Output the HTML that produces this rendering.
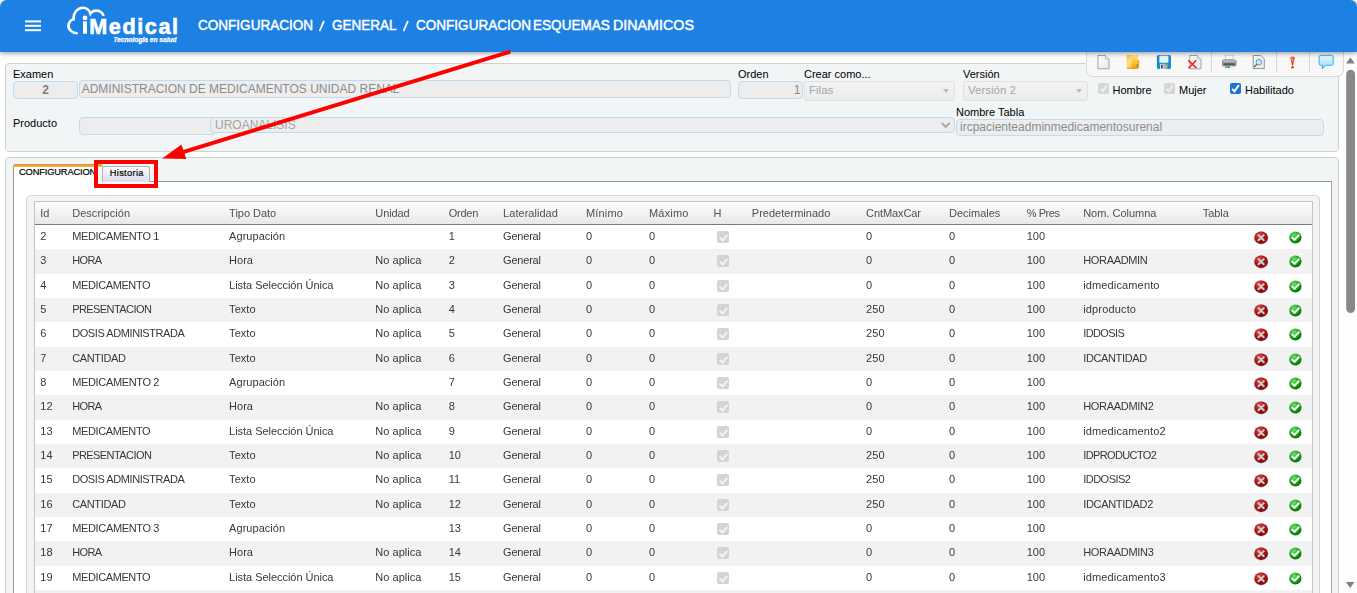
<!DOCTYPE html>
<html><head><meta charset="utf-8">
<style>
*{box-sizing:border-box;margin:0;padding:0}
html,body{width:1357px;height:593px;overflow:hidden;background:#fff;font-family:"Liberation Sans",sans-serif;color:#000}
.abs{position:absolute}
#hdr{position:absolute;left:0;top:0;width:1357px;height:52px;background:#1d80e3;border-radius:7px 7px 0 0;box-shadow:0 1px 5px rgba(40,40,40,.5);z-index:5}
#hdr .bc{position:absolute;top:17px;color:#fff;font-weight:normal;font-size:14px;white-space:nowrap;line-height:16px;transform-origin:0 0;-webkit-text-stroke:0.45px #fff}
#tb{position:absolute;left:1086px;top:40px;width:258px;height:37px;background:#f8f8f8;border:1px solid #dadada;border-radius:0 0 7px 7px;z-index:3}
#p1{position:absolute;left:5px;top:63px;width:1334px;height:89px;background:#f2f5f6;border:1px solid #d0d0d0;border-radius:4px}
#p2{position:absolute;left:5px;top:157px;width:1334px;height:460px;background:#f2f5f6;border:1px solid #d0d0d0;border-radius:4px}
.lbl{position:absolute;font-size:11px;line-height:13px;color:#000;white-space:nowrap}
.inp{position:absolute;background:#ededed;border:1px solid #c3dbee;border-radius:4px;font-size:12px;color:#8c8c8c;white-space:nowrap;overflow:hidden;line-height:15px}
.sel{position:absolute;background:linear-gradient(#f3f3f3,#ececec);border:1px solid #e0e0e0;border-radius:2.5px;font-size:11.5px;color:#a2a6aa;white-space:nowrap;line-height:16px}
.tri{position:absolute;width:0;height:0;border-left:3.5px solid transparent;border-right:3.5px solid transparent;border-top:4px solid #bdbdbd}
.chk{position:absolute;width:10.5px;height:10.5px;background:#d6d6d6;border-radius:2px}
.chk.on{background:#1a73e8;box-shadow:inset 0 0 0 .6px #0b4fb0}
.chk::after{content:"";position:absolute;left:3.2px;top:1px;width:2.8px;height:5.8px;border:solid #f6f6f6;border-width:0 1.6px 1.6px 0;transform:rotate(40deg)}
.chk.on::after{border-color:#fff}
#tabc{position:absolute;left:13px;top:181px;width:1319px;height:420px;background:#fff;border:1px solid #aaa;border-left-color:#999}
#gw{position:absolute;left:26px;top:195px;width:1294px;height:420px;background:#f2f5f6;border:1px solid #d5d5d5;border-radius:5px}
#tbl{position:absolute;left:34px;top:201px;width:1279px;height:420px;background:#fff;border:1px solid #c4c4c4;overflow:hidden;will-change:transform}
#th{position:absolute;left:0;top:0;width:100%;height:23px;background:linear-gradient(#fdfdfd,#e8e8e8);border-bottom:1px solid #7a7a7a;box-shadow:0 1px 0 rgba(120,120,120,.35)}
.hc{position:absolute;top:5px;font-size:11px;color:#505050;white-space:nowrap;line-height:13px;letter-spacing:0}
.r{position:absolute;left:0;width:100%}
.c{position:absolute;top:4.5px;font-size:11px;color:#383838;white-space:nowrap;line-height:13px}
.cb{position:absolute;top:6px;width:12px;height:12px;background:#d4d4d4;border-radius:2px}
.cb::after{content:"";position:absolute;left:3.5px;top:1.5px;width:3px;height:6px;border:solid #f4f4f4;border-width:0 2px 2px 0;transform:rotate(40deg)}
.ic{position:absolute}
.xr{position:absolute;top:6px;width:14px;height:13px;border-radius:50%;background:radial-gradient(circle at 40% 30%,#e04848,#b01010 60%,#800000);box-shadow:0 0 1px #555}
.ok{position:absolute;top:6.5px;width:12.5px;height:12px;border-radius:50%;background:radial-gradient(circle at 40% 30%,#50d050,#10a010 60%,#007000)}
#sb{position:absolute;left:1343px;top:52px;width:14px;height:541px;background:#fdfdfd}
</style></head><body>
<svg width="0" height="0" style="position:absolute">
 <defs>
  <radialGradient id="rg" cx=".38" cy=".3" r=".75"><stop offset="0" stop-color="#d85050"/><stop offset=".55" stop-color="#b01010"/><stop offset="1" stop-color="#700404"/></radialGradient>
  <radialGradient id="gg" cx=".38" cy=".3" r=".75"><stop offset="0" stop-color="#70e070"/><stop offset=".55" stop-color="#18a818"/><stop offset="1" stop-color="#006a00"/></radialGradient>
  <symbol id="ix" viewBox="0 0 16 15"><ellipse cx="8.1" cy="7.9" rx="7.2" ry="6.6" fill="#6a6a6a" opacity=".45"/><ellipse cx="8.1" cy="7.7" rx="6.7" ry="6.2" fill="url(#rg)"/><path d="M5.4 5.1 L10.8 10.3 M10.8 5.1 L5.4 10.3" stroke="#cfcfcf" stroke-width="1.9" stroke-linecap="round"/></symbol>
  <symbol id="iok" viewBox="0 0 13 13"><ellipse cx="6.4" cy="6.5" rx="6.1" ry="6" fill="url(#gg)"/><path d="M3.2 6.6 L5.5 8.9 L9.8 4.3" fill="none" stroke="#fff" stroke-width="2" stroke-linecap="round" stroke-linejoin="round"/></symbol>
 </defs>
</svg>

<div id="p1">
</div>
<div class="lbl" style="left:13px;top:68px">Examen</div>
<div class="inp" style="left:13px;top:81px;width:65px;height:18px;text-align:center;padding-top:1px;font-weight:bold;color:#808080">2</div>
<div class="inp" style="left:79px;top:80px;width:652px;height:18px;padding:1px 0 0 1.7px">ADMINISTRACION DE MEDICAMENTOS UNIDAD RENAL</div>
<div class="lbl" style="left:738px;top:68px">Orden</div>
<div class="inp" style="left:738px;top:81px;width:65px;height:18px;text-align:right;padding:1px 1.5px 0 0;color:#8a8a8a">1</div>
<div class="lbl" style="left:804px;top:68px">Crear como...</div>
<div class="sel" style="left:804px;top:81px;width:151px;height:20px;padding-left:4px">Filas</div>
<div class="tri" style="left:943px;top:89.3px"></div>
<div class="lbl" style="left:963px;top:68px">Versión</div>
<div class="sel" style="left:963px;top:81px;width:125px;height:20px;padding-left:4px">Versión 2</div>
<div class="tri" style="left:1076px;top:89.3px"></div>
<svg class="abs" style="left:1098.2px;top:83px" width="11" height="11"><rect x="0" y="0" width="11" height="11" rx="2" fill="#d6d6d6"/><path d="M2.4 5.7 L4.6 8.1 L8.8 2.4" fill="none" stroke="#f2f2f2" stroke-width="1.7"/></svg>
<div class="lbl" style="left:1112.5px;top:84px">Hombre</div>
<svg class="abs" style="left:1164.2px;top:83px" width="11" height="11"><rect x="0" y="0" width="11" height="11" rx="2" fill="#d6d6d6"/><path d="M2.4 5.7 L4.6 8.1 L8.8 2.4" fill="none" stroke="#f2f2f2" stroke-width="1.7"/></svg>
<div class="lbl" style="left:1179px;top:84px">Mujer</div>
<svg class="abs" style="left:1230.3px;top:82.9px" width="11" height="11"><rect x="0" y="0" width="11" height="11" rx="2" fill="#1a74d6"/><path d="M2.2 5.8 L4.4 8.3 L8.9 2.1" fill="none" stroke="#fff" stroke-width="2"/></svg>
<div class="lbl" style="left:1245px;top:84px">Habilitado</div>

<div class="lbl" style="left:13px;top:117px">Producto</div>
<div class="inp" style="left:79px;top:117px;width:137px;height:18px"></div>
<div class="inp" style="left:210px;top:117px;width:745px;height:16px;padding:0 0 0 4px;color:#a4a4a4">UROANALISIS</div>
<svg class="abs" style="left:938px;top:119px" width="16" height="12"><path d="M3.8 4 L7.7 8 L11.6 4" fill="none" stroke="#a6a6a6" stroke-width="1.9"/></svg>
<div class="lbl" style="left:956px;top:106px">Nombre Tabla</div>
<div class="inp" style="left:956px;top:119px;width:368px;height:17px;padding:0 0 0 3px">ircpacienteadminmedicamentosurenal</div>

<div id="p2"></div>
<div id="tabc"></div>
<div id="tabline" style="position:absolute;left:150px;top:181px;width:1182px;height:1px;background:#8e9c9c"></div>
<div id="tab1" style="position:absolute;left:13px;top:164px;width:90px;height:18px;background:#fff;border-left:1px solid #999;border-radius:3px 3px 0 0"></div>
<div class="abs" style="left:13px;top:164px;width:90px;height:3px;background:linear-gradient(#e68a28,#f6b850);border-radius:3px 3px 0 0"></div>
<div class="abs" style="left:13px;top:181px;width:1px;height:1px;background:#999"></div>
<span class="abs" style="left:19px;top:167px;font-size:9.3px;line-height:11px;letter-spacing:-0.15px;color:#000;white-space:nowrap;-webkit-text-stroke:0.2px #000">CONFIGURACION</span>
<div id="tab2" style="position:absolute;left:102px;top:166px;width:48px;height:16px;background:linear-gradient(#fbfbfd,#dcdcec);border:1px solid #a8b4bc;border-bottom:none;border-radius:3px 3px 0 0"></div>
<span class="abs" style="left:109.8px;top:168px;font-size:9.2px;line-height:11px;letter-spacing:0.35px;color:#000;white-space:nowrap;-webkit-text-stroke:0.2px #000">Historia</span>

<div id="gw"></div>
<div id="tbl">
 <div id="th"><span class="hc" style="left:5.3px;letter-spacing:0.011px">Id</span><span class="hc" style="left:37.2px;letter-spacing:0.035px">Descripción</span><span class="hc" style="left:194.1px;letter-spacing:-0.022px">Tipo Dato</span><span class="hc" style="left:340.3px;letter-spacing:-0.098px">Unidad</span><span class="hc" style="left:413.7px;letter-spacing:-0.233px">Orden</span><span class="hc" style="left:468.1px;letter-spacing:0.033px">Lateralidad</span><span class="hc" style="left:551.0px;letter-spacing:0.156px">Mínimo</span><span class="hc" style="left:614.0px;letter-spacing:0.189px">Máximo</span><span class="hc" style="left:678.5px;letter-spacing:-0.097px">H</span><span class="hc" style="left:716.8px;letter-spacing:0.020px">Predeterminado</span><span class="hc" style="left:831.1px;letter-spacing:-0.097px">CntMaxCar</span><span class="hc" style="left:914.0px;letter-spacing:-0.005px">Decimales</span><span class="hc" style="left:991.7px;letter-spacing:-0.415px">% Pres</span><span class="hc" style="left:1048.2px;letter-spacing:-0.007px">Nom. Columna</span><span class="hc" style="left:1167.7px;letter-spacing:-0.027px">Tabla</span></div>
<div class="r" style="top:23px;height:24px;background:#ffffff"><span class="c" style="left:5.3px;letter-spacing:0.064px">2</span><span class="c" style="left:37.2px;letter-spacing:-0.348px">MEDICAMENTO 1</span><span class="c" style="left:194.1px;letter-spacing:0.044px">Agrupación</span><span class="c" style="left:413.7px;letter-spacing:0.064px">1</span><span class="c" style="left:468.1px;letter-spacing:-0.216px">General</span><span class="c" style="left:551.0px;letter-spacing:0.064px">0</span><span class="c" style="left:614.0px;letter-spacing:0.064px">0</span><span class="cb" style="left:682.0px"></span><span class="c" style="left:831.1px;letter-spacing:0.064px">0</span><span class="c" style="left:914.0px;letter-spacing:0.064px">0</span><span class="c" style="left:991.7px;letter-spacing:0.064px">100</span><svg class="ic" style="left:1217.5px;top:5px" width="16" height="15"><use href="#ix"/></svg><svg class="ic" style="left:1253.5px;top:6px" width="13" height="13"><use href="#iok"/></svg></div>
<div class="r" style="top:47px;height:25px;background:#f2f2f2"><span class="c" style="left:5.3px;letter-spacing:0.064px">3</span><span class="c" style="left:37.2px;letter-spacing:-0.603px">HORA</span><span class="c" style="left:194.1px;letter-spacing:-0.003px">Hora</span><span class="c" style="left:340.3px;letter-spacing:0.027px">No aplica</span><span class="c" style="left:413.7px;letter-spacing:0.064px">2</span><span class="c" style="left:468.1px;letter-spacing:-0.216px">General</span><span class="c" style="left:551.0px;letter-spacing:0.064px">0</span><span class="c" style="left:614.0px;letter-spacing:0.064px">0</span><span class="cb" style="left:682.0px"></span><span class="c" style="left:831.1px;letter-spacing:0.064px">0</span><span class="c" style="left:914.0px;letter-spacing:0.064px">0</span><span class="c" style="left:991.7px;letter-spacing:0.064px">100</span><span class="c" style="left:1048.2px;letter-spacing:-0.335px">HORAADMIN</span><svg class="ic" style="left:1217.5px;top:5px" width="16" height="15"><use href="#ix"/></svg><svg class="ic" style="left:1253.5px;top:6px" width="13" height="13"><use href="#iok"/></svg></div>
<div class="r" style="top:72px;height:24px;background:#ffffff"><span class="c" style="left:5.3px;letter-spacing:0.064px">4</span><span class="c" style="left:37.2px;letter-spacing:-0.388px">MEDICAMENTO</span><span class="c" style="left:194.1px;letter-spacing:-0.039px">Lista Selección Única</span><span class="c" style="left:340.3px;letter-spacing:0.027px">No aplica</span><span class="c" style="left:413.7px;letter-spacing:0.064px">3</span><span class="c" style="left:468.1px;letter-spacing:-0.216px">General</span><span class="c" style="left:551.0px;letter-spacing:0.064px">0</span><span class="c" style="left:614.0px;letter-spacing:0.064px">0</span><span class="cb" style="left:682.0px"></span><span class="c" style="left:831.1px;letter-spacing:0.064px">0</span><span class="c" style="left:914.0px;letter-spacing:0.064px">0</span><span class="c" style="left:991.7px;letter-spacing:0.064px">100</span><span class="c" style="left:1048.2px;letter-spacing:0.139px">idmedicamento</span><svg class="ic" style="left:1217.5px;top:5px" width="16" height="15"><use href="#ix"/></svg><svg class="ic" style="left:1253.5px;top:6px" width="13" height="13"><use href="#iok"/></svg></div>
<div class="r" style="top:96px;height:24px;background:#f2f2f2"><span class="c" style="left:5.3px;letter-spacing:0.064px">5</span><span class="c" style="left:37.2px;letter-spacing:-0.574px">PRESENTACION</span><span class="c" style="left:194.1px;letter-spacing:0.043px">Texto</span><span class="c" style="left:340.3px;letter-spacing:0.027px">No aplica</span><span class="c" style="left:413.7px;letter-spacing:0.064px">4</span><span class="c" style="left:468.1px;letter-spacing:-0.216px">General</span><span class="c" style="left:551.0px;letter-spacing:0.064px">0</span><span class="c" style="left:614.0px;letter-spacing:0.064px">0</span><span class="cb" style="left:682.0px"></span><span class="c" style="left:831.1px;letter-spacing:0.064px">250</span><span class="c" style="left:914.0px;letter-spacing:0.064px">0</span><span class="c" style="left:991.7px;letter-spacing:0.064px">100</span><span class="c" style="left:1048.2px;letter-spacing:0.158px">idproducto</span><svg class="ic" style="left:1217.5px;top:5px" width="16" height="15"><use href="#ix"/></svg><svg class="ic" style="left:1253.5px;top:6px" width="13" height="13"><use href="#iok"/></svg></div>
<div class="r" style="top:120px;height:25px;background:#ffffff"><span class="c" style="left:5.3px;letter-spacing:0.064px">6</span><span class="c" style="left:37.2px;letter-spacing:-0.420px">DOSIS ADMINISTRADA</span><span class="c" style="left:194.1px;letter-spacing:0.043px">Texto</span><span class="c" style="left:340.3px;letter-spacing:0.027px">No aplica</span><span class="c" style="left:413.7px;letter-spacing:0.064px">5</span><span class="c" style="left:468.1px;letter-spacing:-0.216px">General</span><span class="c" style="left:551.0px;letter-spacing:0.064px">0</span><span class="c" style="left:614.0px;letter-spacing:0.064px">0</span><span class="cb" style="left:682.0px"></span><span class="c" style="left:831.1px;letter-spacing:0.064px">250</span><span class="c" style="left:914.0px;letter-spacing:0.064px">0</span><span class="c" style="left:991.7px;letter-spacing:0.064px">100</span><span class="c" style="left:1048.2px;letter-spacing:-0.597px">IDDOSIS</span><svg class="ic" style="left:1217.5px;top:5px" width="16" height="15"><use href="#ix"/></svg><svg class="ic" style="left:1253.5px;top:6px" width="13" height="13"><use href="#iok"/></svg></div>
<div class="r" style="top:145px;height:24px;background:#f2f2f2"><span class="c" style="left:5.3px;letter-spacing:0.064px">7</span><span class="c" style="left:37.2px;letter-spacing:-0.359px">CANTIDAD</span><span class="c" style="left:194.1px;letter-spacing:0.043px">Texto</span><span class="c" style="left:340.3px;letter-spacing:0.027px">No aplica</span><span class="c" style="left:413.7px;letter-spacing:0.064px">6</span><span class="c" style="left:468.1px;letter-spacing:-0.216px">General</span><span class="c" style="left:551.0px;letter-spacing:0.064px">0</span><span class="c" style="left:614.0px;letter-spacing:0.064px">0</span><span class="cb" style="left:682.0px"></span><span class="c" style="left:831.1px;letter-spacing:0.064px">250</span><span class="c" style="left:914.0px;letter-spacing:0.064px">0</span><span class="c" style="left:991.7px;letter-spacing:0.064px">100</span><span class="c" style="left:1048.2px;letter-spacing:-0.366px">IDCANTIDAD</span><svg class="ic" style="left:1217.5px;top:5px" width="16" height="15"><use href="#ix"/></svg><svg class="ic" style="left:1253.5px;top:6px" width="13" height="13"><use href="#iok"/></svg></div>
<div class="r" style="top:169px;height:24px;background:#ffffff"><span class="c" style="left:5.3px;letter-spacing:0.064px">8</span><span class="c" style="left:37.2px;letter-spacing:-0.348px">MEDICAMENTO 2</span><span class="c" style="left:194.1px;letter-spacing:0.044px">Agrupación</span><span class="c" style="left:413.7px;letter-spacing:0.064px">7</span><span class="c" style="left:468.1px;letter-spacing:-0.216px">General</span><span class="c" style="left:551.0px;letter-spacing:0.064px">0</span><span class="c" style="left:614.0px;letter-spacing:0.064px">0</span><span class="cb" style="left:682.0px"></span><span class="c" style="left:831.1px;letter-spacing:0.064px">0</span><span class="c" style="left:914.0px;letter-spacing:0.064px">0</span><span class="c" style="left:991.7px;letter-spacing:0.064px">100</span><svg class="ic" style="left:1217.5px;top:5px" width="16" height="15"><use href="#ix"/></svg><svg class="ic" style="left:1253.5px;top:6px" width="13" height="13"><use href="#iok"/></svg></div>
<div class="r" style="top:193px;height:25px;background:#f2f2f2"><span class="c" style="left:5.3px;letter-spacing:0.064px">12</span><span class="c" style="left:37.2px;letter-spacing:-0.603px">HORA</span><span class="c" style="left:194.1px;letter-spacing:-0.003px">Hora</span><span class="c" style="left:340.3px;letter-spacing:0.027px">No aplica</span><span class="c" style="left:413.7px;letter-spacing:0.064px">8</span><span class="c" style="left:468.1px;letter-spacing:-0.216px">General</span><span class="c" style="left:551.0px;letter-spacing:0.064px">0</span><span class="c" style="left:614.0px;letter-spacing:0.064px">0</span><span class="cb" style="left:682.0px"></span><span class="c" style="left:831.1px;letter-spacing:0.064px">0</span><span class="c" style="left:914.0px;letter-spacing:0.064px">0</span><span class="c" style="left:991.7px;letter-spacing:0.064px">100</span><span class="c" style="left:1048.2px;letter-spacing:-0.295px">HORAADMIN2</span><svg class="ic" style="left:1217.5px;top:5px" width="16" height="15"><use href="#ix"/></svg><svg class="ic" style="left:1253.5px;top:6px" width="13" height="13"><use href="#iok"/></svg></div>
<div class="r" style="top:218px;height:24px;background:#ffffff"><span class="c" style="left:5.3px;letter-spacing:0.064px">13</span><span class="c" style="left:37.2px;letter-spacing:-0.388px">MEDICAMENTO</span><span class="c" style="left:194.1px;letter-spacing:-0.039px">Lista Selección Única</span><span class="c" style="left:340.3px;letter-spacing:0.027px">No aplica</span><span class="c" style="left:413.7px;letter-spacing:0.064px">9</span><span class="c" style="left:468.1px;letter-spacing:-0.216px">General</span><span class="c" style="left:551.0px;letter-spacing:0.064px">0</span><span class="c" style="left:614.0px;letter-spacing:0.064px">0</span><span class="cb" style="left:682.0px"></span><span class="c" style="left:831.1px;letter-spacing:0.064px">0</span><span class="c" style="left:914.0px;letter-spacing:0.064px">0</span><span class="c" style="left:991.7px;letter-spacing:0.064px">100</span><span class="c" style="left:1048.2px;letter-spacing:0.134px">idmedicamento2</span><svg class="ic" style="left:1217.5px;top:5px" width="16" height="15"><use href="#ix"/></svg><svg class="ic" style="left:1253.5px;top:6px" width="13" height="13"><use href="#iok"/></svg></div>
<div class="r" style="top:242px;height:24px;background:#f2f2f2"><span class="c" style="left:5.3px;letter-spacing:0.064px">14</span><span class="c" style="left:37.2px;letter-spacing:-0.574px">PRESENTACION</span><span class="c" style="left:194.1px;letter-spacing:0.043px">Texto</span><span class="c" style="left:340.3px;letter-spacing:0.027px">No aplica</span><span class="c" style="left:413.7px;letter-spacing:0.064px">10</span><span class="c" style="left:468.1px;letter-spacing:-0.216px">General</span><span class="c" style="left:551.0px;letter-spacing:0.064px">0</span><span class="c" style="left:614.0px;letter-spacing:0.064px">0</span><span class="cb" style="left:682.0px"></span><span class="c" style="left:831.1px;letter-spacing:0.064px">250</span><span class="c" style="left:914.0px;letter-spacing:0.064px">0</span><span class="c" style="left:991.7px;letter-spacing:0.064px">100</span><span class="c" style="left:1048.2px;letter-spacing:-0.613px">IDPRODUCTO2</span><svg class="ic" style="left:1217.5px;top:5px" width="16" height="15"><use href="#ix"/></svg><svg class="ic" style="left:1253.5px;top:6px" width="13" height="13"><use href="#iok"/></svg></div>
<div class="r" style="top:266px;height:25px;background:#ffffff"><span class="c" style="left:5.3px;letter-spacing:0.064px">15</span><span class="c" style="left:37.2px;letter-spacing:-0.420px">DOSIS ADMINISTRADA</span><span class="c" style="left:194.1px;letter-spacing:0.043px">Texto</span><span class="c" style="left:340.3px;letter-spacing:0.027px">No aplica</span><span class="c" style="left:413.7px;letter-spacing:0.064px">11</span><span class="c" style="left:468.1px;letter-spacing:-0.216px">General</span><span class="c" style="left:551.0px;letter-spacing:0.064px">0</span><span class="c" style="left:614.0px;letter-spacing:0.064px">0</span><span class="cb" style="left:682.0px"></span><span class="c" style="left:831.1px;letter-spacing:0.064px">250</span><span class="c" style="left:914.0px;letter-spacing:0.064px">0</span><span class="c" style="left:991.7px;letter-spacing:0.064px">100</span><span class="c" style="left:1048.2px;letter-spacing:-0.514px">IDDOSIS2</span><svg class="ic" style="left:1217.5px;top:5px" width="16" height="15"><use href="#ix"/></svg><svg class="ic" style="left:1253.5px;top:6px" width="13" height="13"><use href="#iok"/></svg></div>
<div class="r" style="top:291px;height:24px;background:#f2f2f2"><span class="c" style="left:5.3px;letter-spacing:0.064px">16</span><span class="c" style="left:37.2px;letter-spacing:-0.359px">CANTIDAD</span><span class="c" style="left:194.1px;letter-spacing:0.043px">Texto</span><span class="c" style="left:340.3px;letter-spacing:0.027px">No aplica</span><span class="c" style="left:413.7px;letter-spacing:0.064px">12</span><span class="c" style="left:468.1px;letter-spacing:-0.216px">General</span><span class="c" style="left:551.0px;letter-spacing:0.064px">0</span><span class="c" style="left:614.0px;letter-spacing:0.064px">0</span><span class="cb" style="left:682.0px"></span><span class="c" style="left:831.1px;letter-spacing:0.064px">250</span><span class="c" style="left:914.0px;letter-spacing:0.064px">0</span><span class="c" style="left:991.7px;letter-spacing:0.064px">100</span><span class="c" style="left:1048.2px;letter-spacing:-0.327px">IDCANTIDAD2</span><svg class="ic" style="left:1217.5px;top:5px" width="16" height="15"><use href="#ix"/></svg><svg class="ic" style="left:1253.5px;top:6px" width="13" height="13"><use href="#iok"/></svg></div>
<div class="r" style="top:315px;height:24px;background:#ffffff"><span class="c" style="left:5.3px;letter-spacing:0.064px">17</span><span class="c" style="left:37.2px;letter-spacing:-0.348px">MEDICAMENTO 3</span><span class="c" style="left:194.1px;letter-spacing:0.044px">Agrupación</span><span class="c" style="left:413.7px;letter-spacing:0.064px">13</span><span class="c" style="left:468.1px;letter-spacing:-0.216px">General</span><span class="c" style="left:551.0px;letter-spacing:0.064px">0</span><span class="c" style="left:614.0px;letter-spacing:0.064px">0</span><span class="cb" style="left:682.0px"></span><span class="c" style="left:831.1px;letter-spacing:0.064px">0</span><span class="c" style="left:914.0px;letter-spacing:0.064px">0</span><span class="c" style="left:991.7px;letter-spacing:0.064px">100</span><svg class="ic" style="left:1217.5px;top:5px" width="16" height="15"><use href="#ix"/></svg><svg class="ic" style="left:1253.5px;top:6px" width="13" height="13"><use href="#iok"/></svg></div>
<div class="r" style="top:339px;height:25px;background:#f2f2f2"><span class="c" style="left:5.3px;letter-spacing:0.064px">18</span><span class="c" style="left:37.2px;letter-spacing:-0.603px">HORA</span><span class="c" style="left:194.1px;letter-spacing:-0.003px">Hora</span><span class="c" style="left:340.3px;letter-spacing:0.027px">No aplica</span><span class="c" style="left:413.7px;letter-spacing:0.064px">14</span><span class="c" style="left:468.1px;letter-spacing:-0.216px">General</span><span class="c" style="left:551.0px;letter-spacing:0.064px">0</span><span class="c" style="left:614.0px;letter-spacing:0.064px">0</span><span class="cb" style="left:682.0px"></span><span class="c" style="left:831.1px;letter-spacing:0.064px">0</span><span class="c" style="left:914.0px;letter-spacing:0.064px">0</span><span class="c" style="left:991.7px;letter-spacing:0.064px">100</span><span class="c" style="left:1048.2px;letter-spacing:-0.295px">HORAADMIN3</span><svg class="ic" style="left:1217.5px;top:5px" width="16" height="15"><use href="#ix"/></svg><svg class="ic" style="left:1253.5px;top:6px" width="13" height="13"><use href="#iok"/></svg></div>
<div class="r" style="top:364px;height:24px;background:#ffffff"><span class="c" style="left:5.3px;letter-spacing:0.064px">19</span><span class="c" style="left:37.2px;letter-spacing:-0.388px">MEDICAMENTO</span><span class="c" style="left:194.1px;letter-spacing:-0.039px">Lista Selección Única</span><span class="c" style="left:340.3px;letter-spacing:0.027px">No aplica</span><span class="c" style="left:413.7px;letter-spacing:0.064px">15</span><span class="c" style="left:468.1px;letter-spacing:-0.216px">General</span><span class="c" style="left:551.0px;letter-spacing:0.064px">0</span><span class="c" style="left:614.0px;letter-spacing:0.064px">0</span><span class="cb" style="left:682.0px"></span><span class="c" style="left:831.1px;letter-spacing:0.064px">0</span><span class="c" style="left:914.0px;letter-spacing:0.064px">0</span><span class="c" style="left:991.7px;letter-spacing:0.064px">100</span><span class="c" style="left:1048.2px;letter-spacing:0.134px">idmedicamento3</span><svg class="ic" style="left:1217.5px;top:5px" width="16" height="15"><use href="#ix"/></svg><svg class="ic" style="left:1253.5px;top:6px" width="13" height="13"><use href="#iok"/></svg></div>
<div class="r" style="top:388px;height:24px;background:#f2f2f2"></div>
</div>

<div id="tb"></div>
<svg class="abs" style="left:1086px;top:40px;z-index:4" width="258" height="40" viewBox="1086 40 258 40">
 <defs>
  <linearGradient id="pg" x1="0" y1="0" x2="1" y2="1"><stop offset="0" stop-color="#ffffff"/><stop offset="1" stop-color="#e8e8e8"/></linearGradient>
  <linearGradient id="fg" x1="0" y1="0" x2="1" y2="1"><stop offset="0" stop-color="#f8b830"/><stop offset=".35" stop-color="#fde080"/><stop offset=".7" stop-color="#f6c040"/><stop offset="1" stop-color="#f0a010"/></linearGradient>
  <linearGradient id="fg2" x1="0" y1="0" x2="0" y2="1"><stop offset="0" stop-color="#fbe28a"/><stop offset=".6" stop-color="#f8c030"/><stop offset="1" stop-color="#f0a010"/></linearGradient>
  <linearGradient id="shg" x1="0" y1="0" x2="1" y2="0"><stop offset="0" stop-color="#f0f0f0"/><stop offset="1" stop-color="#9098a0"/></linearGradient>
  <linearGradient id="bg1" x1="0" y1="0" x2="1" y2="0"><stop offset="0" stop-color="#1088c8"/><stop offset=".5" stop-color="#30a8e0"/><stop offset="1" stop-color="#1080c0"/></linearGradient>
  <linearGradient id="chg" x1="0" y1="0" x2="0" y2="1"><stop offset="0" stop-color="#e8f8ff"/><stop offset="1" stop-color="#9cdcf8"/></linearGradient>
  <radialGradient id="exg" cx=".4" cy=".3" r=".7"><stop offset="0" stop-color="#ff9060"/><stop offset="1" stop-color="#e01000"/></radialGradient>
 </defs>
 <!-- new doc -->
 <path d="M1098 55.5 H1105.5 L1109 59 V68.8 H1098 Z" fill="url(#pg)" stroke="#9a9a9a" stroke-width=".9"/>
 <path d="M1105.5 55.5 V59 H1109" fill="#f0f0f0" stroke="#b0b0b0" stroke-width=".7"/>
 <!-- folder -->
 <rect x="1126.8" y="55" width="11.2" height="13.9" fill="url(#fg)"/>
 <rect x="1131.8" y="55.6" width="5.8" height="12.8" fill="url(#fg2)"/>
 <rect x="1137.6" y="60" width="1.6" height="8" fill="#f2a818"/>
 <rect x="1126.8" y="67.6" width="11.2" height="1.3" fill="#e89a10" opacity=".8"/>
 <circle cx="1137.3" cy="65.5" r="0.9" fill="#28a098"/>
 <!-- floppy -->
 <rect x="1156.9" y="55" width="14" height="14" rx="1.6" fill="url(#bg1)"/>
 <rect x="1159.4" y="55.8" width="9" height="6.9" fill="#e4f6f2"/>
 <rect x="1160" y="64.3" width="7.8" height="4.5" fill="url(#shg)"/>
 <rect x="1161" y="65" width="1.6" height="3.2" fill="#304050"/>
 <!-- delete doc -->
 <path d="M1189.8 55.5 H1197.5 L1201 59 V68.8 H1189.8 Z" fill="url(#pg)" stroke="#9a9a9a" stroke-width=".9"/>
 <path d="M1197.5 55.5 V59 H1201" fill="#f0f0f0" stroke="#b0b0b0" stroke-width=".7"/>
 <path d="M1188.3 60.3 L1196.5 68 M1196.3 60.3 L1188.5 68.2" stroke="#f02020" stroke-width="1.6"/>
 <!-- separators -->
 <rect x="1211" y="52" width="1" height="20.5" fill="#d8d8d8"/>
 <rect x="1276" y="52" width="1" height="20.5" fill="#d8d8d8"/>
 <rect x="1309" y="52" width="1" height="20.5" fill="#d8d8d8"/>
 <!-- printer -->
 <rect x="1225.5" y="55.2" width="7.5" height="4.5" fill="#fafafa" stroke="#b8b8b8" stroke-width=".6"/>
 <rect x="1222" y="59.5" width="14.4" height="7" rx="1.8" fill="#8a8a8a"/>
 <rect x="1223" y="60.2" width="12.4" height="2.2" fill="#b8b8b8"/>
 <rect x="1224" y="63.4" width="10.5" height="1.5" fill="#505050"/>
 <rect x="1224.5" y="66.5" width="9.5" height="2.3" fill="#e8f0f8"/>
 <rect x="1227.5" y="66.3" width="2.2" height="1.6" fill="#108010"/>
 <rect x="1225.2" y="66.3" width="1.6" height="1.6" fill="#3080d0"/>
 <!-- preview doc -->
 <path d="M1253.2 55.5 H1260.8 L1264.3 59 V68.6 H1253.2 Z" fill="url(#pg)" stroke="#8a8a8a" stroke-width=".9"/>
 <circle cx="1258.8" cy="62.2" r="2.8" fill="#c8ecfc" stroke="#4a9ad0" stroke-width="1"/>
 <path d="M1256.8 64.3 L1254 67.2" stroke="#606060" stroke-width="1.3"/>
 <!-- exclamation -->
 <path d="M1290.2 57.6 Q1292.5 55.2 1294.8 57.6 L1293 65.2 H1292 Z" fill="url(#exg)"/>
 <circle cx="1292.5" cy="67.3" r="1.2" fill="#f02000"/>
 <!-- chat bubble -->
 <path d="M1320.8 55.3 H1331.5 Q1333.2 55.3 1333.2 57 V63.6 Q1333.2 65.3 1331.5 65.3 H1325.5 L1322.3 68.8 L1322.8 65.3 H1320.8 Q1319.1 65.3 1319.1 63.6 V57 Q1319.1 55.3 1320.8 55.3 Z" fill="url(#chg)" stroke="#28b0e8" stroke-width="1"/>
</svg>

<div id="hdr">
 <svg class="abs" style="left:0;top:0" width="200" height="52">
  <rect x="25" y="20.4" width="16" height="2" fill="#fff"/>
  <rect x="25" y="24.8" width="16" height="2" fill="#fff"/>
  <rect x="25" y="29.2" width="16" height="2" fill="#fff"/>
  <path d="M77.8 33.3 C72 33.5 67.5 29 68.6 24.5 C69.3 21.5 71.5 19.7 73.6 19.2 C73.2 12.5 77.5 7.8 83 7.7 C86.5 7.7 89.2 10 90.4 13.6 C91.7 11.5 94 10.5 96.5 10.6 C100 10.7 103 13 103.6 16" fill="none" stroke="#fff" stroke-width="2.6"/>
  <circle cx="85" cy="17.9" r="2.4" fill="#fff"/>
  <rect x="83" y="21.4" width="4" height="12.3" fill="#fff"/>
  <text x="89.2" y="33.7" fill="#fff" stroke="#fff" stroke-width="0.6" font-family="Liberation Sans" font-weight="bold" font-size="21.6" letter-spacing="1.6">Medical</text>
  <text x="113.4" y="41.5" fill="#fff" stroke="#fff" stroke-width="0.25" font-family="Liberation Sans" font-weight="bold" font-style="italic" font-size="6.5" letter-spacing="0.05">Tecnología en salud</text>
 </svg>
 <span class="bc" style="left:197.6px;transform:scaleX(0.967)">CONFIGURACION</span>
 <svg class="abs" style="left:316px;top:17.5px" width="12" height="16"><path d="M3.6 13.2 L8 2.8" stroke="#fff" stroke-width="1.7"/></svg>
 <span class="bc" style="left:331.8px;transform:scaleX(0.965)">GENERAL</span>
 <svg class="abs" style="left:400px;top:17.5px" width="12" height="16"><path d="M3.6 13.2 L8 2.8" stroke="#fff" stroke-width="1.7"/></svg>
 <span class="bc" style="left:415.9px;transform:scaleX(0.967)">CONFIGURACION</span>
 <span class="bc" style="left:533.3px;transform:scaleX(0.969)">ESQUEMAS</span>
 <span class="bc" style="left:612.5px;transform:scaleX(1.02)">DINAMICOS</span>
</div>

<div id="sb">
 <svg class="abs" style="left:0;top:0" width="14" height="541">
  <polygon points="3,11.6 11.8,11.6 7.4,5.6" fill="#808080"/>
  <rect x="3.2" y="17.7" width="8.8" height="243.3" rx="4.4" fill="#888"/>
  <polygon points="3,530 11.4,530 7.2,536.1" fill="#808080"/>
 </svg>
</div>

<svg class="abs" style="left:0;top:0;z-index:10" width="1357" height="593">
 <line x1="510.3" y1="51.7" x2="178" y2="153.6" stroke="#ff0000" stroke-width="4"/>
 <polygon points="162.1,158.6 181.5,144.5 186.3,158.9" fill="#ff0000"/>
 <rect x="96" y="162" width="60" height="24" fill="none" stroke="#ff0000" stroke-width="4"/>
</svg>
</body></html>
